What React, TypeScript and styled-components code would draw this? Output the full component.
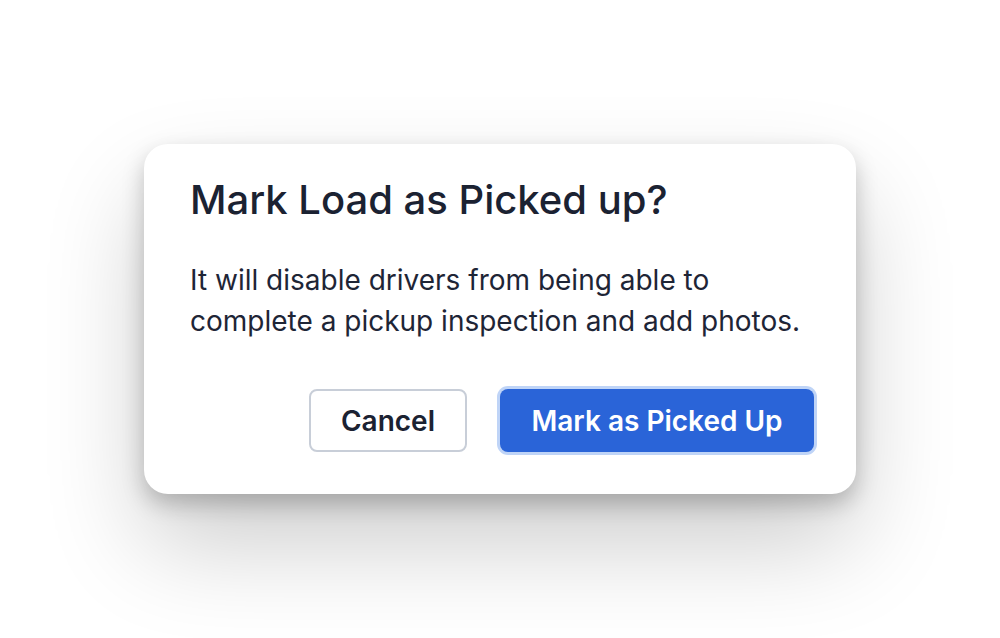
import React from "react";
import styled, { createGlobalStyle } from "styled-components";

const GlobalStyle = createGlobalStyle`
  html, body {
    margin: 0;
    padding: 0;
    background: #ffffff;
  }
  body {
    font-family: Inter, "Noto Sans", "Liberation Sans", sans-serif;
    -webkit-font-smoothing: antialiased;
  }
`;

export default function App() {
  return (
    <>
      <GlobalStyle />
      <Page>
        <Dialog role="dialog" aria-labelledby="dlg-title">
          <Title id="dlg-title">Mark Load as Picked up?</Title>
          <Body>
            It will disable drivers from being able to
            <br />
            complete a pickup inspection and add photos.
          </Body>
          <Actions>
            <SecondaryButton>Cancel</SecondaryButton>
            <PrimaryButton>Mark as Picked Up</PrimaryButton>
          </Actions>
        </Dialog>
      </Page>
    </>
  );
}

const Page = styled.main`
  width: 1000px;
  height: 638px;
  display: flex;
  align-items: center;
  justify-content: center;
`;

const Dialog = styled.section`
  box-sizing: border-box;
  width: 712px;
  padding: 32px 42px 42px 46px;
  background: #ffffff;
  border-radius: 24px;
  box-shadow: 0 10px 22px rgba(0, 0, 0, 0.22), 0 50px 100px rgba(0, 0, 0, 0.2);
`;

const Title = styled.h2`
  margin: 0;
  font-size: 40px;
  line-height: 48px;
  font-weight: 500;
  color: #1b2232;
`;

const Body = styled.p`
  margin: 36px 0 0;
  font-size: 28px;
  line-height: 41px;
  font-weight: 400;
  color: #1e2536;
`;

const Actions = styled.div`
  margin-top: 47px;
  display: flex;
  justify-content: flex-end;
  gap: 33px;
`;

const ButtonBase = styled.button`
  box-sizing: border-box;
  height: 63px;
  border-radius: 8px;
  font-family: inherit;
  font-size: 28px;
  font-weight: 600;
  cursor: pointer;
`;

const SecondaryButton = styled(ButtonBase)`
  width: 158px;
  background: #ffffff;
  color: #1b2232;
  border: 2px solid #c8ced8;
`;

const PrimaryButton = styled(ButtonBase)`
  width: 314px;
  background: #2a64d8;
  color: #ffffff;
  border: none;
  box-shadow: 0 0 0 3px #bfd4f7;
`;
